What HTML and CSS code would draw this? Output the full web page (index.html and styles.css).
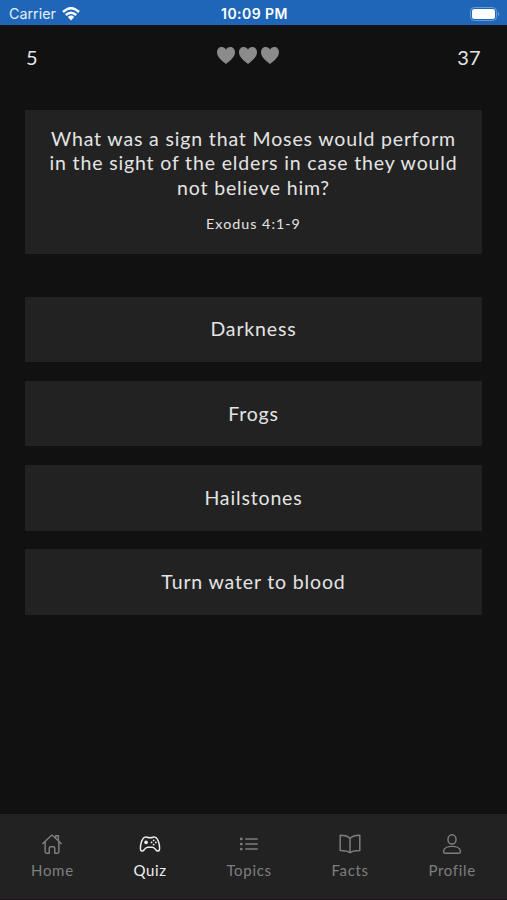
FILE: index.html
```html
<!DOCTYPE html>
<html lang="en">
<head>
<meta charset="utf-8">
<title>Bible Quiz</title>
<link rel="stylesheet" href="styles.css">
</head>
<body>
<div class="app">
  <header class="status">
    <div class="carrier"><span>Carrier</span>
      <svg class="wifi" viewBox="0 0 18 14"><path d="M1 5Q9-2.5 17 5M3.8 8Q9 3.3 14.2 8" fill="none" stroke="currentColor" stroke-width="2.4"/><path d="M5.8 10Q9 7.2 12.2 10L9 13.4Z" fill="currentColor"/></svg>
    </div>
    <div class="clock">10:09 PM</div>
    <div class="power">
      <svg class="battery" viewBox="0 0 30 14"><rect x=".5" y=".5" width="26" height="13" rx="3.8" fill="none" stroke="#6c9bd6"/><rect x="2" y="2" width="23" height="10" rx="2.3" fill="#fff"/><path d="M28 5Q30 7 28 9Z" fill="#8eb2df"/></svg>
    </div>
  </header>
  <main class="quiz">
    <div class="score">
      <span>5</span>
      <div class="lives">
        <svg viewBox="0 0 18 17"><path d="M9 17C5 13.8 0 10.2 0 5.2C0 2 2.1 0 4.7 0C6.8 0 8.2 1 9 2.7C9.8 1 11.2 0 13.3 0C15.9 0 18 2 18 5.2C18 10.2 13 13.8 9 17Z"/></svg>
        <svg viewBox="0 0 18 17"><path d="M9 17C5 13.8 0 10.2 0 5.2C0 2 2.1 0 4.7 0C6.8 0 8.2 1 9 2.7C9.8 1 11.2 0 13.3 0C15.9 0 18 2 18 5.2C18 10.2 13 13.8 9 17Z"/></svg>
        <svg viewBox="0 0 18 17"><path d="M9 17C5 13.8 0 10.2 0 5.2C0 2 2.1 0 4.7 0C6.8 0 8.2 1 9 2.7C9.8 1 11.2 0 13.3 0C15.9 0 18 2 18 5.2C18 10.2 13 13.8 9 17Z"/></svg>
      </div>
      <span class="timer">37</span>
    </div>
    <section class="question">
      <h1>What was a sign that Moses would perform<br>in the sight of the elders in case they would<br>not believe him?</h1>
      <p>Exodus 4:1-9</p>
    </section>
    <div class="answers">
      <button>Darkness</button>
      <button>Frogs</button>
      <button>Hailstones</button>
      <button>Turn water to blood</button>
    </div>
  </main>
  <nav class="tabs">
    <a class="tab"><svg viewBox="0 0 24 24"><path d="M2 11.5L11 3Q12 2 13 3L22 11.5M4.500 9.500V20.500Q4.500 22 6 22H9V16.500Q9 15 10.500 15H13.500Q15 15 15 16.500V22H18Q19.500 22 19.500 20.500V9.500M16 5.500V3H19V8.500"/></svg><span>Home</span></a>
    <a class="tab active"><svg viewBox="0 0 24 24"><path d="M6.500 4.500C8 4 9 5.200 12 5.200S16 4 17.500 4.500C21 5.500 22.500 13 22.500 17C22.500 20 20 20.500 18.500 18.500C17 16.500 16.500 15.500 14.500 15.500H9.500C7.500 15.500 7 16.500 5.500 18.500C4 20.500 1.500 20 1.500 17C1.500 13 3 5.500 6.500 4.500Z"/><circle class="solid" cx="7.700" cy="10.300" r="2"/><g class="solid"><circle cx="16" cy="8" r="1"/><circle cx="16" cy="12.600" r="1"/><circle cx="13.700" cy="10.300" r="1"/><circle cx="18.300" cy="10.300" r="1"/></g></svg><span>Quiz</span></a>
    <a class="tab"><svg viewBox="0 0 24 24"><path d="M8.500 6.500H21M8.500 12H21M8.500 17.500H21"/><g class="solid"><circle cx="3.600" cy="6.500" r="1.500"/><circle cx="3.600" cy="12" r="1.500"/><circle cx="3.600" cy="17.500" r="1.500"/></g></svg><span>Topics</span></a>
    <a class="tab"><svg viewBox="0 0 24 24"><path d="M12 6C9.500 3 6 2.500 1.300 2.500V19C6 19 9.500 19 12 21.500C14.500 19 18 19 22.700 19V2.500C18 2.500 14.500 3 12 6ZV21.500"/></svg><span>Facts</span></a>
    <a class="tab"><svg viewBox="0 0 24 24"><ellipse cx="12" cy="7" rx="4.400" ry="5"/><path d="M2.800 20C3.300 12.800 20.700 12.800 21.200 20Q21.300 22 19.500 22H4.500Q2.700 22 2.800 20Z"/></svg><span>Profile</span></a>
  </nav>
</div>
</body>
</html>
```

FILE: styles.css
```css
* { box-sizing: border-box; }
body { margin: 0; background: #111; }
.app {
  height: 900px;
  display: flex;
  flex-direction: column;
  color: #e4e4e4;
  font-family: Lato, "Noto Sans", sans-serif;
}
.status {
  height: 25px;
  padding: 2px 7px 0 9px;
  display: grid;
  grid-template-columns: 1fr auto 1fr;
  align-items: center;
  background: #1f66b9;
  color: #fff;
  font: 14.3px Inter, sans-serif;
}
.carrier { display: flex; align-items: center; gap: 6px; color: #e6effa; }
.wifi { width: 18px; height: 14px; color: #fff; }
.clock { font-weight: 600; font-size: 14px; letter-spacing: .45px; }
.power { display: flex; justify-content: flex-end; }
.battery { width: 30px; height: 14px; }
.quiz { flex: 1; padding: 0 25px; }
.score {
  height: 85px;
  padding: 19px 1px 0;
  display: grid;
  grid-template-columns: 1fr auto 1fr;
  align-items: start;
  font-size: 20px;
  line-height: 26px;
}
.timer { text-align: right; letter-spacing: .3px; }
.lives { display: flex; gap: 4px; padding: 3px 12px 0 0; }
.lives svg { width: 18px; height: 17px; fill: #8b8b8b; }
.question {
  height: 144px;
  padding-top: 17px;
  background: #222;
  border-radius: 1px;
  text-align: center;
}
.question h1 {
  margin: 0;
  font-size: 19.5px;
  font-weight: 400;
  line-height: 24.4px;
  letter-spacing: .85px;
  white-space: nowrap;
}
.question p { margin: 14px 0 0; font-size: 14.3px; line-height: 20px; letter-spacing: 1px; }
.answers { display: grid; gap: 18.8px; margin-top: 42.5px; }
.answers button {
  height: 65.5px;
  padding: 0 0 1px;
  border: 0;
  border-radius: 1px;
  background: #222;
  color: inherit;
  font: inherit;
  font-size: 19.5px;
  letter-spacing: .85px;
}
.tabs {
  height: 86px;
  padding: 19px 31px 0;
  display: flex;
  justify-content: space-between;
  background: #222;
  border-bottom: 1px solid #1b131a;
}
.tab {
  display: flex;
  flex-direction: column;
  align-items: center;
  gap: 5px;
  color: #7e7e7e;
  font-size: 15px;
  line-height: 20px;
  letter-spacing: .7px;
}
.tab.active { color: #eee; }
.tab svg { width: 22px; height: 22px; fill: none; stroke: currentColor; stroke-width: 1.6; stroke-linejoin: round; stroke-linecap: round; }
.tab .solid { fill: currentColor; stroke: none; }
```
